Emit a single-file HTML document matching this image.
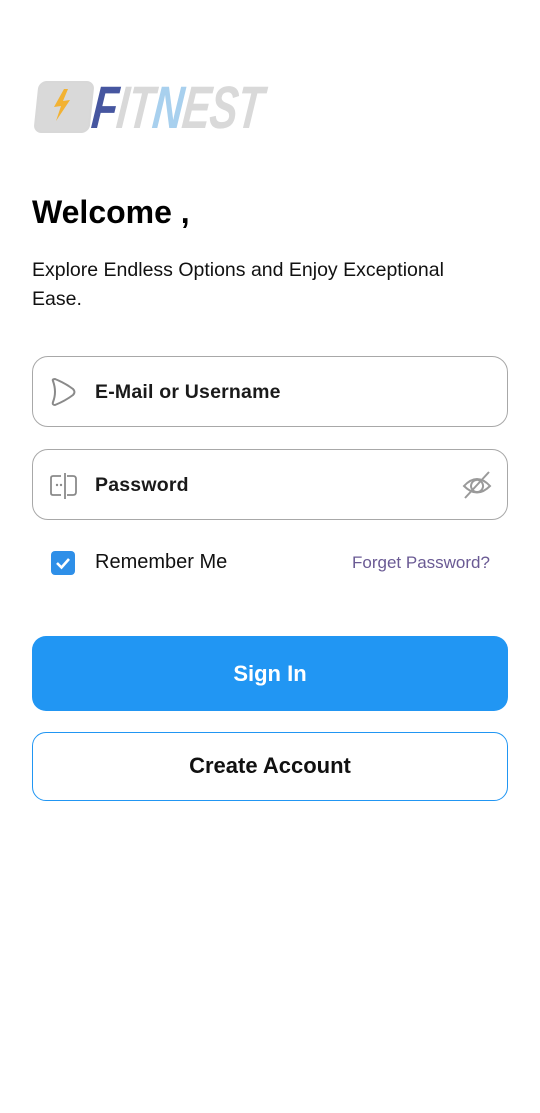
<!DOCTYPE html>
<html><head><meta charset="utf-8"><style>
body{margin:0;width:540px;height:1113px;background:#fff;font-family:"Liberation Sans",sans-serif;position:relative;overflow:hidden;color:#111}
.abs{position:absolute}
.field{position:absolute;left:32px;width:476px;height:71px;border:1.5px solid #a8a8a8;border-radius:16px;box-sizing:border-box}
.lbl{position:absolute;left:62px;top:24px;font-size:19.5px;font-weight:bold;color:#1a1a1a;letter-spacing:.2px}
.logo{font-style:italic;font-weight:900;font-size:60px;letter-spacing:-1px;transform:skewX(-6deg) scaleX(.7);transform-origin:left top;font-family:"Liberation Sans",sans-serif}
</style></head><body>
<div class="abs" style="left:36px;top:81px;width:52px;height:48px;border:2px solid #d8d8d8;border-radius:8px;background:#d9d9d9;transform:skewX(-6deg)"></div>
<svg class="abs" style="left:48px;top:87px" width="28" height="36" viewBox="0 0 28 36"><path d="M16 2 L6 20 L13 19 L8 34 L22 13 L15 14 L20 2Z" fill="#f2b233"/></svg>
<div class="abs logo" style="left:96px;top:73px"><span style="color:#4656a0">F</span><span style="color:#d9d9d9">IT</span><span style="color:#a8d0ee">N</span><span style="color:#d9d9d9">EST</span></div>
<div class="abs" style="left:32px;top:194px;font-size:32px;font-weight:bold;color:#000">Welcome ,</div>
<div class="abs" style="left:32px;top:256px;font-size:19.5px;line-height:29px;color:#111;width:440px">Explore Endless Options and Enjoy Exceptional Ease.</div>
<div class="field" style="top:356px">
<svg class="abs" style="left:16px;top:20px" width="28" height="30" viewBox="0 0 28 30"><path d="M4 4 Q3 2 6 2 Q16 6 24 12 Q27 15 24 18 Q16 24 6 28 Q3 28 4 25 Q8 15 4 4Z" fill="none" stroke="#8a8a8a" stroke-width="2"/></svg>
<div class="lbl">E-Mail or Username</div></div>
<div class="field" style="top:449px">
<svg class="abs" style="left:16px;top:22px" width="30" height="28" viewBox="0 0 30 28"><path d="M12 4 H4 Q2 4 2 6 V21 Q2 23 4 23 H12 M18 4 H24 Q27 4 27 7 V20 Q27 23 24 23 H18 M16 1 V27" fill="none" stroke="#8a8a8a" stroke-width="1.8"/><circle cx="8" cy="13" r="1.2" fill="#8a8a8a"/><circle cx="12" cy="13" r="1.2" fill="#8a8a8a"/></svg>
<div class="lbl">Password</div>
<svg class="abs" style="left:428px;top:19px" width="32" height="32" viewBox="0 0 32 32"><path d="M3 17 Q16 3 29 17 Q16 30 3 17Z M16 11 A6 6 0 1 0 16.1 11 M28 3 L4 29" fill="none" stroke="#9a9a9a" stroke-width="2"/></svg>
</div>
<div class="abs" style="left:51px;top:551px;width:24px;height:24px;background:#2e8fe8;border-radius:4px"></div>
<svg class="abs" style="left:51px;top:551px" width="24" height="24"><path d="M6 12 L10.5 16.5 L18 8" fill="none" stroke="#fff" stroke-width="2.6"/></svg>
<div class="abs" style="left:95px;top:551px;font-size:20px;color:#111">Remember Me</div>
<div class="abs" style="left:352px;top:553px;font-size:17px;color:#6a5a94">Forget Password?</div>
<div class="abs" style="left:32px;top:636px;width:476px;height:75px;background:#2196f3;border-radius:14px;color:#fff;font-size:22px;font-weight:bold;text-align:center;line-height:75px">Sign In</div>
<div class="abs" style="left:32px;top:732px;width:476px;height:69px;border:1.5px solid #2196f3;border-radius:14px;box-sizing:border-box;color:#111;font-size:22px;font-weight:bold;text-align:center;line-height:66px">Create Account</div>
</body></html>
